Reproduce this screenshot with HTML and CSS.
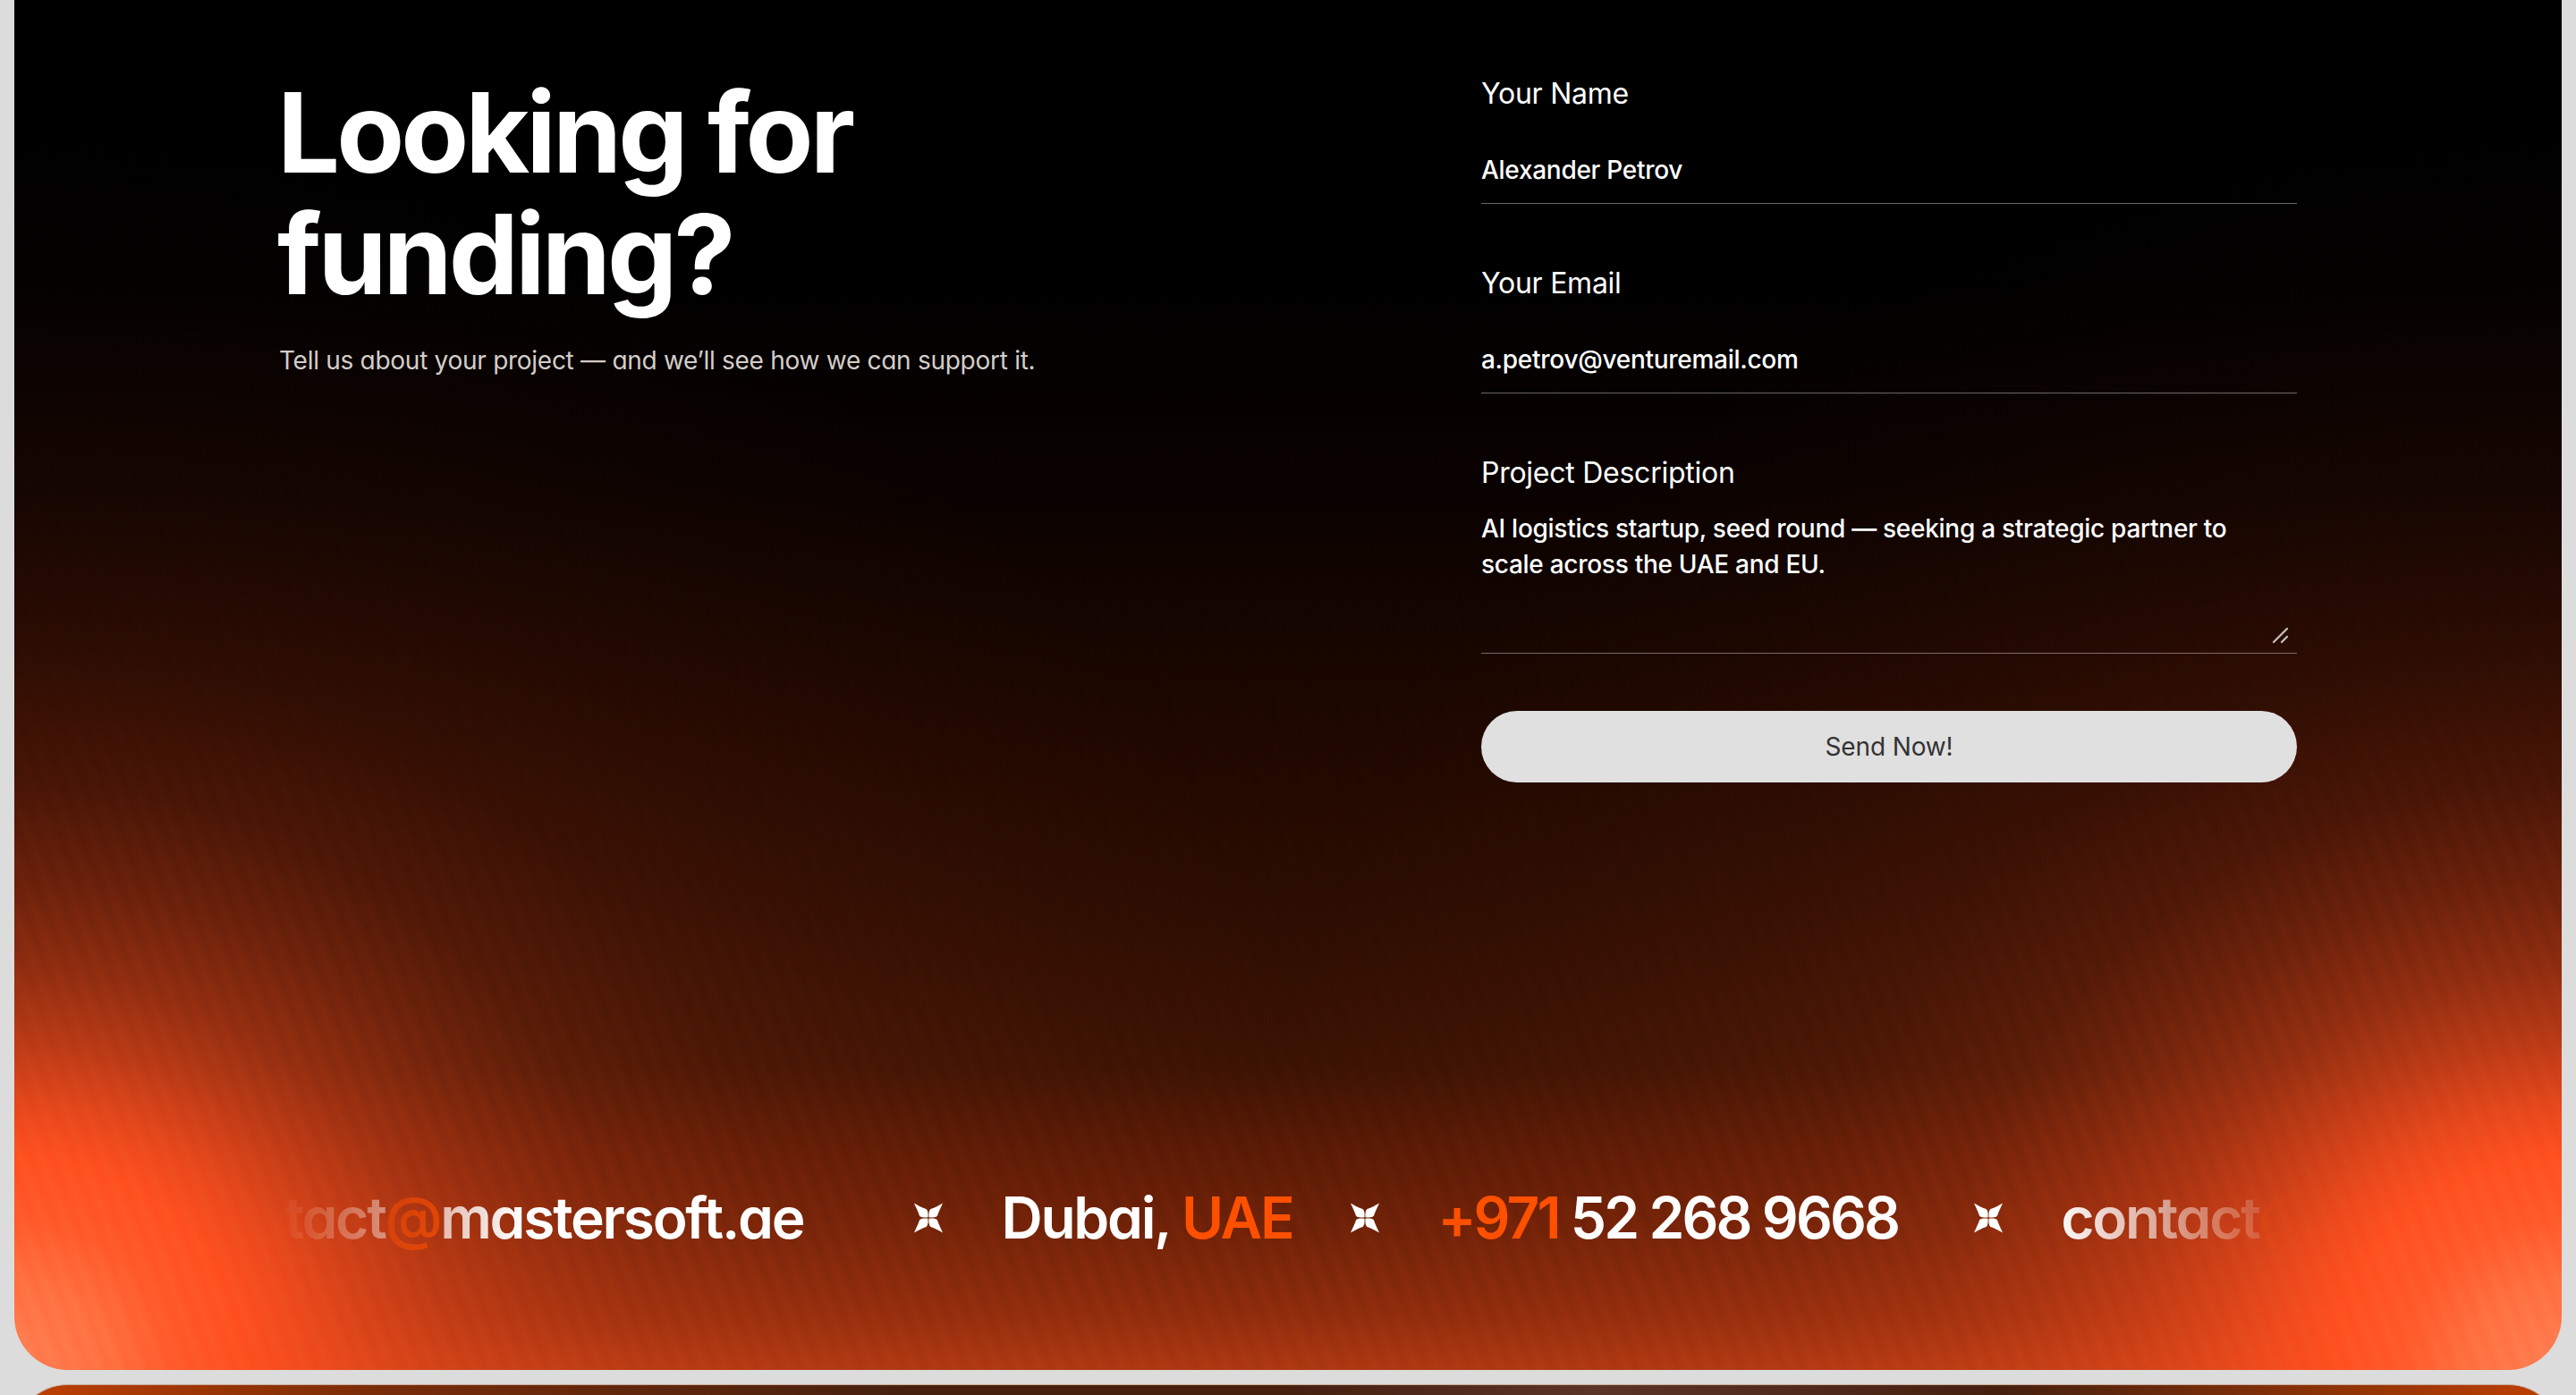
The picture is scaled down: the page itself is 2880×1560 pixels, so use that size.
FILE: index.html
```html
<!DOCTYPE html>
<html lang="en">
<head>
<meta charset="utf-8">
<title>Contact</title>
<link rel="stylesheet" href="styles.css">
</head>
<body>
<svg class="defs" width="0" height="0" aria-hidden="true">
  <symbol id="star" viewBox="0 0 34 34">
    <g id="petal"><path d="M16.500 16.200C16.800 12 16.500 8.500 14.500 7C10 5.500 5 3 1 .5 3 5 5.500 10 7 14.500 8.500 16.500 12 16.800 16.500 16.200Z"/></g>
    <use href="#petal" transform="matrix(-1 0 0 1 34 0)"/>
    <use href="#petal" transform="matrix(1 0 0 -1 0 34)"/>
    <use href="#petal" transform="matrix(-1 0 0 -1 34 34)"/>
  </symbol>
</svg>
<main class="card">
  <section class="content">
    <div class="intro">
      <h1 class="title">Looking for<br>funding?</h1>
      <p class="lead">Tell us about your project — and we’ll see how we can support it.</p>
    </div>
    <form class="form">
      <div class="field">
        <div class="label">Your Name</div>
        <div class="value">Alexander Petrov</div>
      </div>
      <div class="field">
        <div class="label">Your Email</div>
        <div class="value">a.petrov@venturemail.com</div>
      </div>
      <div class="field field-area">
        <div class="label">Project Description</div>
        <div class="value value-area">AI logistics startup, seed round — seeking a strategic partner to scale across the UAE and EU.
          <svg class="grip" viewBox="0 0 20 20" aria-hidden="true"><path d="M2 18 17 3M11 18l6-6"/></svg>
        </div>
      </div>
      <div class="submit">Send Now!</div>
    </form>
  </section>
  <section class="marquee">
    <div class="track">
      <span class="item item-first">contact<em>@</em>mastersoft.ae</span>
      <svg class="star"><use href="#star"/></svg>
      <span class="item">Dubai, <em>UAE</em></span>
      <svg class="star"><use href="#star"/></svg>
      <span class="item item-phone"><em>+971</em> 52 268 9668</span>
      <svg class="star"><use href="#star"/></svg>
      <span class="item">contact<em>@</em>mastersoft.ae</span>
    </div>
  </section>
</main>
<div class="next-card"></div>
</body>
</html>
```
FILE: styles.css
```css
* { box-sizing: border-box; }
html, body { margin: 0; height: 1560px; overflow: hidden; }
body {
  background: #dcdcdc;
  padding: 0 16px;
  font-family: Inter, "Liberation Sans", sans-serif;
  color: #fff;
}
.defs { position: absolute; }
.card {
  height: 1532px;
  border-radius: 0 0 60px 60px;
  display: flex;
  flex-direction: column;
  padding: 0 296px 130px;
  background-image:
    repeating-linear-gradient(70deg, rgba(255,255,255,.03) 0, rgba(0,0,0,.03) 11px, rgba(255,255,255,.03) 22px),
    radial-gradient(1500px 1400px at 0 100%, #ff8055 0, #ff7040 7%, #ff5a2a 12%, #ff5020 17%, rgba(255,80,32,.86) 21%, rgba(255,80,32,.66) 26%, rgba(255,80,32,.46) 32%, rgba(255,80,32,.3) 39%, rgba(255,80,32,.17) 47%, rgba(255,80,32,.09) 58%, rgba(255,80,32,.05) 70%, rgba(255,80,32,.02) 85%, rgba(255,80,32,0) 100%),
    radial-gradient(1500px 1400px at 100% 100%, #ff8055 0, #ff7040 7%, #ff5a2a 12%, #ff5020 17%, rgba(255,80,32,.86) 21%, rgba(255,80,32,.66) 26%, rgba(255,80,32,.46) 32%, rgba(255,80,32,.3) 39%, rgba(255,80,32,.17) 47%, rgba(255,80,32,.09) 58%, rgba(255,80,32,.05) 70%, rgba(255,80,32,.02) 85%, rgba(255,80,32,0) 100%),
    linear-gradient(to bottom, #000 0, #000 20%, #0a0200 36%, #1f0800 54%, #2c0d02 66%, #3c1303 78%, #5a1a05 84%, #702208 90%, #8f2c0c 96%, #ad3812 100%);
  background-blend-mode: overlay, normal, normal, normal;
}
.content {
  display: grid;
  grid-template-columns: 1fr 912px;
  padding-top: 80px;
}
.title {
  margin: 0 0 0 -2px;
  font-size: 124px;
  line-height: 136px;
  font-weight: 650;
  letter-spacing: -.032em;
  font-feature-settings: "cv11";
}
.lead {
  margin: 31px 0 0;
  font-size: 28px;
  line-height: 40px;
  letter-spacing: -.01em;
  color: #d4cdc9;
  font-feature-settings: "cv11";
}
.form { display: flex; flex-direction: column; }
.field { height: 212px; display: flex; flex-direction: column; }
.label { font-size: 32px; line-height: 50px; letter-spacing: -.008em; }
.value {
  margin-top: 40px;
  padding-bottom: 17px;
  font-size: 28px;
  line-height: 40px;
  font-weight: 500;
  letter-spacing: -.01em;
  border-bottom: 1.5px solid rgba(255,255,255,.4);
}
.field-area { height: 291px; }
.value-area {
  position: relative;
  margin-top: 17px;
  padding-right: 60px;
  height: 160px;
}
.grip {
  position: absolute;
  right: 8px;
  bottom: 10px;
  width: 20px;
  height: 20px;
  fill: none;
  stroke: #c4bcb8;
  stroke-width: 2.400;
  stroke-linecap: round;
}
.submit {
  height: 80px;
  border-radius: 40px;
  background: #e0e0e0;
  color: #333;
  font-size: 28px;
  letter-spacing: -.005em;
  display: flex;
  align-items: center;
  justify-content: center;
}
.marquee {
  margin-top: auto;
  overflow: hidden;
  -webkit-mask-image: linear-gradient(to right, transparent 0, #000 12%, #000 88%, transparent 100%);
  mask-image: linear-gradient(to right, transparent 0, #000 12%, #000 88%, transparent 100%);
}
.track {
  display: flex;
  align-items: center;
  gap: 64px;
  width: max-content;
  margin-left: -103px;
  font-size: 64px;
  line-height: 80px;
  font-weight: 600;
  letter-spacing: -.035em;
  white-space: nowrap;
  font-feature-settings: "cv11";
}
.item em { font-style: normal; color: #ff5000; }
.item-first { margin-right: 59px; }
.item-phone { margin-right: 20px; letter-spacing: -.045em; }
.star { width: 34px; height: 34px; fill: #fff; flex: none; }
.next-card {
  height: 60px;
  margin-top: 16px;
  border-radius: 60px 60px 0 0;
  border-top: 1px solid #c9a898;
  background: linear-gradient(to right, #c04000 0, #7a2c08 14%, #45200f 35%, #45200f 50%, #5a3425 62%, #45200f 78%, #c04000 100%);
}
```
